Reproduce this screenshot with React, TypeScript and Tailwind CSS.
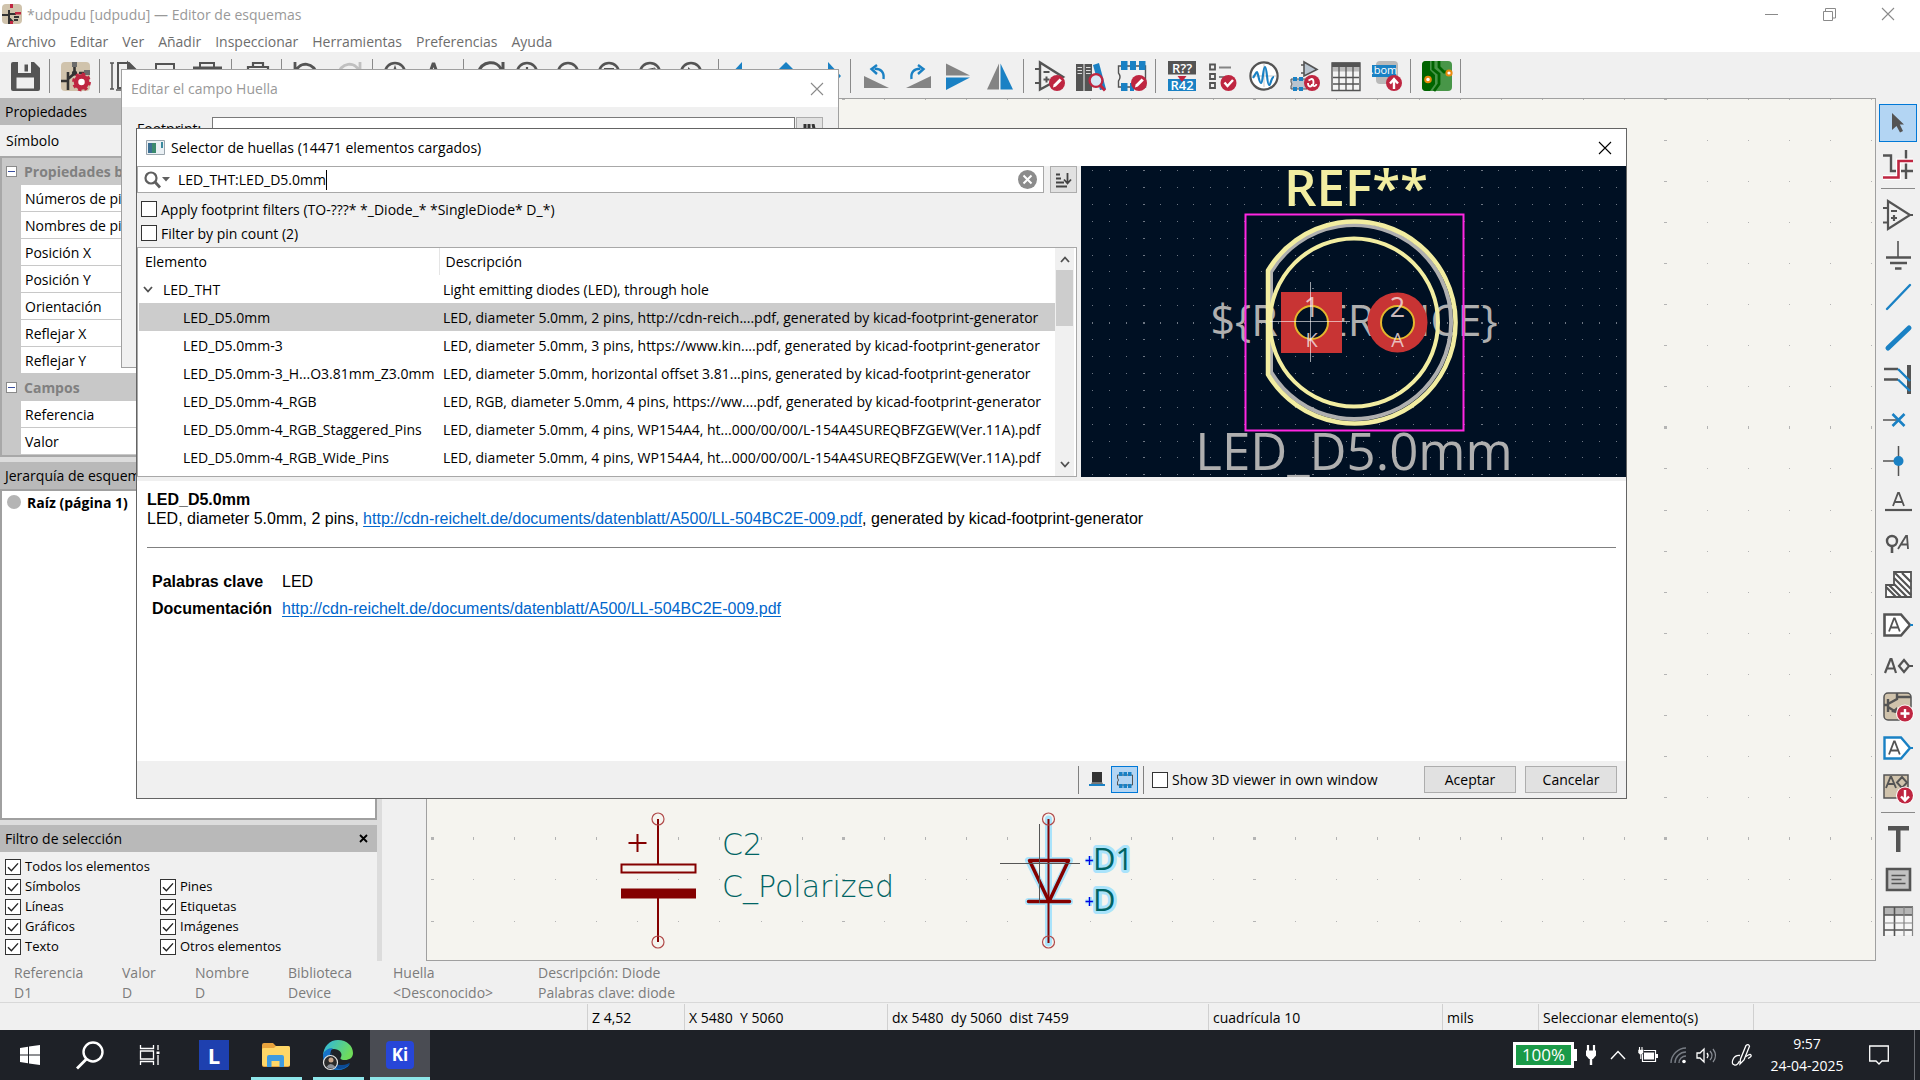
import React from "react";

type Kids = { children?: React.ReactNode };

const DARK = "#545454";
const BLUE = "#1a81c4";
const RED = "#bf2641";
const GRAY = "#848484";

/* ---------- shared pieces ---------- */

function Icon({ children, size = 30, w, h }: Kids & { size?: number; w?: number; h?: number }) {
  return (
    <svg width={w ?? size} height={h ?? size} viewBox={`0 0 ${w ?? size} ${h ?? size}`} fill="none" aria-hidden="true" className="block shrink-0 overflow-visible">
      {children}
    </svg>
  );
}

function Check({ label, checked = false, small = false }: { label: string; checked?: boolean; small?: boolean }) {
  return (
    <label className={small ? "flex h-5 items-center gap-1 text-[13px] whitespace-nowrap" : "flex h-6 items-center gap-1 text-[14px] whitespace-nowrap"}>
      <span className="grid size-4 shrink-0">
        <input type="checkbox" defaultChecked={checked} className="peer col-start-1 row-start-1 size-4 appearance-none border border-[#333333] bg-white" />
        <svg viewBox="0 0 16 16" className="pointer-events-none invisible col-start-1 row-start-1 size-4 peer-checked:visible" fill="none" stroke="#222" strokeWidth="1.4" aria-hidden="true">
          <path d="M3 8.2l3.4 3.6L13 4.4" />
        </svg>
      </span>
      {label}
    </label>
  );
}

function Cross({ color }: { color: string }) {
  return (
    <svg width="14" height="14" viewBox="0 0 14 14" stroke={color} strokeWidth="1.1" aria-hidden="true" className="block">
      <path d="M1 1l12 12M13 1L1 13" />
    </svg>
  );
}

/* ---------- top toolbar icons ---------- */

const Badge = ({ children }: Kids) => (
  <g>
    <circle cx="22" cy="22" r="8" fill={RED} />
    {children}
  </g>
);

const Pencil = () => (
  <Badge>
    <path d="M18 26.4l.6-3 6-6 2.2 2.2-6 6z" fill="#fff" />
  </Badge>
);

const Lens = ({ children }: Kids) => (
  <g>
    <circle cx="11" cy="12" r="10" stroke={DARK} strokeWidth="2.6" />
    <path d="M19 20l9 9" stroke={DARK} strokeWidth="3.4" />
    {children}
  </g>
);

const topIcons: Record<string, React.ReactNode> = {
  Guardar: (
    <g>
      <path d="M0 3q0-2 2-2h21l6 6v21q0 2-2 2H2q-2 0-2-2z" fill={DARK} />
      <path d="M7 1h13v11H7z" fill="#efefef" />
      <path d="M13.500 3.500h3.500v7h-3.500z" fill={DARK} />
      <path d="M5.500 16.500h17.500v11H5.500z" fill="#efefef" />
    </g>
  ),
  "Configurar esquema": (
    <g>
      <rect x="0" y="1" width="29" height="29" rx="4" fill="#d0c3ac" />
      <rect x="11" y="1" width="5" height="5" fill="#6b6b6b" />
      <path d="M13.500 6v5M7 11v18M0 20h7M7 18l7-6M18 12h8" stroke="#333" strokeWidth="2.600" />
      <circle cx="13.500" cy="12" r="2.600" fill="#333" />
      <rect x="23" y="9" width="6" height="5" fill="#6b6b6b" />
      <circle cx="20.500" cy="21" r="5.500" stroke={RED} strokeWidth="4.500" fill="#fff" />
      <circle cx="20.500" cy="21" r="8.200" stroke={RED} strokeWidth="2.400" strokeDasharray="3.400 3.040" />
    </g>
  ),
  Página: (
    <g stroke={DARK} strokeWidth="2">
      <path d="M7 2h11l7 7v18H7z" />
      <path d="M17 2v8h8z" fill={DARK} />
      <path d="M1 2v26M-1 2h4M-1 28h4M5 29h6" strokeWidth="1.500" />
    </g>
  ),
  Imprimir: (
    <g>
      <path d="M4 10V3h18v7" stroke={DARK} strokeWidth="2" />
      <path d="M0 8.500h27v13H0z" fill={DARK} />
    </g>
  ),
  Trazar: (
    <g>
      <path d="M7 6V2h14v4" stroke={DARK} strokeWidth="2" />
      <path d="M0 5.500h29v14H0z" fill={DARK} />
    </g>
  ),
  Pegar: (
    <g stroke={DARK} strokeWidth="2.200">
      <path d="M5 6h20v23H5z" />
      <path d="M10 6V2h10v4z" />
    </g>
  ),
  Deshacer: <path d="M2 1v10h9M3 10c4-10 18-9 21 4" stroke={DARK} strokeWidth="2.800" />,
  Rehacer: <path d="M26 1v10h-9M25 10C21 0 7 1 4 14" stroke="#c0c0c0" strokeWidth="2.800" />,
  Buscar: (
    <Lens>
      <path d="M8 16l3-9 3 9" stroke={DARK} strokeWidth="2" />
    </Lens>
  ),
  Reemplazar: <path d="M2 20L8 3h1l6 17M4 14h9" stroke={DARK} strokeWidth="3" />,
  Actualizar: <path d="M3 12C7-1 22-1 26 8M28 1v9h-9" stroke={DARK} strokeWidth="3" />,
  Acercar: (
    <Lens>
      <path d="M11 6v12M5 12h12" stroke={DARK} strokeWidth="2.200" />
    </Lens>
  ),
  Alejar: (
    <Lens>
      <path d="M5 12h12" stroke={DARK} strokeWidth="2.200" />
    </Lens>
  ),
  "Ajustar página": (
    <Lens>
      <path d="M6 7h10v9H6z" fill={DARK} />
    </Lens>
  ),
  "Ajustar objetos": (
    <Lens>
      <path d="M6 9l10-2v9H6z" stroke={DARK} />
    </Lens>
  ),
  "Ajustar selección": (
    <Lens>
      <path d="M8 6l8 7h-8z" fill={DARK} />
    </Lens>
  ),
  Atrás: <path d="M12 1v28L-1 15z" fill={BLUE} />,
  Arriba: <path d="M15 1l14 14H1z" fill={BLUE} />,
  Adelante: <path d="M16 1v28l13-14z" fill={BLUE} />,
  "Rotar a la izquierda": (
    <g>
      <path d="M2 15v12h25z" fill={GRAY} />
      <path d="M21.500 18c1-7-3-10.500-9-10.200" stroke={BLUE} strokeWidth="2.400" />
      <path d="M15 4l-5.500 4 5.500 5" stroke={BLUE} strokeWidth="2.400" />
    </g>
  ),
  "Rotar a la derecha": (
    <g>
      <path d="M28 15v12H3z" fill={GRAY} />
      <path d="M8.500 18c-1-7 3-10.500 9-10.200" stroke={BLUE} strokeWidth="2.400" />
      <path d="M15 4l5.500 4-5.500 5" stroke={BLUE} strokeWidth="2.400" />
    </g>
  ),
  "Reflejar vertical": (
    <g>
      <path d="M2 2.500v12h24z" fill={GRAY} />
      <path d="M2 29V16.500h24z" fill={BLUE} />
    </g>
  ),
  "Reflejar horizontal": (
    <g>
      <path d="M2 28.500h12V2.500z" fill={GRAY} />
      <path d="M15.500 28.500H28L15.500 2.500z" fill={BLUE} />
    </g>
  ),
  "Editor de símbolos": (
    <g>
      <path d="M5 1.500v27L28 16z" stroke={DARK} strokeWidth="2.400" />
      <path d="M0 8h5M0 22h5M8.500 11h6M8.500 18.500h6M11.500 15.500v6" stroke={DARK} strokeWidth="2" />
      <Pencil />
    </g>
  ),
  "Explorador de bibliotecas": (
    <g>
      <path d="M0 3h7.500v27H0zM8.500 3h7.500v27H8.500z" fill={DARK} />
      <path d="M1.500 6.500H6M1.500 9.500H6M1.500 12.500H6M10 6.500h4.500M10 9.500h4.500M10 12.500h4.500" stroke="#ddd" />
      <path d="M17 4l6-2 7 26-6 1z" fill={BLUE} />
      <circle cx="20" cy="19.500" r="6.400" fill="#d5e8f5" stroke={RED} strokeWidth="2.400" />
      <path d="M24 24l5 5.500" stroke={RED} strokeWidth="3" />
    </g>
  ),
  "Editor de huellas": (
    <g>
      <path d="M1.500 5h27v21h-27v-6q3-4 0-8z" stroke={DARK} strokeWidth="1.400" />
      <path d="M4 0h6.500v9H4zM13 0h6v9h-6zM22 0h6.500v9H22zM4 22h6.500v8H4zM13 22h4v8h-4z" fill={BLUE} />
      <Pencil />
    </g>
  ),
  Anotar: (
    <g>
      <path d="M1 0h28v13.500H1z" fill={DARK} />
      <path d="M1 18h28v12H1z" fill={BLUE} />
      <text x="15" y="12" fontSize="13" fontWeight="600" textAnchor="middle" fill="#fff">R??</text>
      <text x="15" y="29" fontSize="13" fontWeight="600" textAnchor="middle" fill="#fff">R42</text>
      <path d="M10.500 15h9L15 21z" fill={RED} />
    </g>
  ),
  "Comprobar reglas": (
    <g>
      <path d="M2 3.500h5v5H2zM2 13h5v5H2zM2 22h5v5H2z" stroke={DARK} strokeWidth="1.800" />
      <path d="M11 6.500h12M11 16h6" stroke={GRAY} strokeWidth="1.800" />
      <circle cx="20.500" cy="22" r="8" fill={RED} />
      <path d="M16.500 21.500l3 3.500 5.500-6" stroke="#fff" strokeWidth="2.400" />
    </g>
  ),
  Simulador: (
    <g>
      <circle cx="15" cy="15" r="13.600" fill="#fff" stroke={DARK} strokeWidth="2.200" />
      <path d="M15 3v23M3 15h24" stroke="#c9c9c9" />
      <path d="M4 17c2-3 3-6 4-6s2 11 4 11 2-16 4-16 2 18 4 18 2-8 5-8" stroke={BLUE} strokeWidth="2.200" />
    </g>
  ),
  "Asignar huellas": (
    <g>
      <path d="M14 1v14l13-6.500z" fill="#b8c4cf" stroke={DARK} strokeWidth="1.600" />
      <path d="M11 4h3M11 12h3" stroke={DARK} strokeWidth="1.600" />
      <path d="M1 18h16v10H1v-3q2-2 0-4z" fill="#b8c4cf" stroke={DARK} />
      <path d="M3 16h4v4H3zM9 16h4v4H9zM3 26h4v4H3zM9 26h4v4H9z" fill={BLUE} />
      <Badge>
        <path d="M18.500 19.500l3-1.500c3 0 2 6 1 6s3 3 4-1M18 22c0 5 4 4 4 1" stroke="#fff" strokeWidth="1.800" />
      </Badge>
    </g>
  ),
  "Tabla de campos": (
    <g>
      <path d="M1 2h28v27.500H1z" fill="#f4f4f4" stroke={DARK} strokeWidth="1.400" />
      <path d="M1 1.500h28v4.500H1z" fill={DARK} />
      <path d="M2 6h26v4.500H2z" fill="#bbb" />
      <path d="M2 16.500h26M2 23h26M8 6v23M15 6v23M22 6v23" stroke={DARK} strokeWidth="1.300" />
    </g>
  ),
  "Lista de materiales": (
    <g>
      <rect x="4" y="0" width="22" height="23" rx="4" fill="#b9b9b9" />
      <path d="M0 4h24v12H0z" fill={BLUE} />
      <text x="12" y="13" fontSize="11" textAnchor="middle" fill="#fff">.bom</text>
      <Badge>
        <path d="M22 28v-9M18 22.500l4-4.500 4 4.500" stroke="#fff" strokeWidth="2.400" />
      </Badge>
    </g>
  ),
  "Editor de placas": (
    <g>
      <rect x="0" y="0" width="30" height="30" rx="4" fill="#489648" />
      <path d="M4 0h4v9l5 5v9l-5 7H4q-4 0-4-4V4q0-4 4-4z" fill="#006400" />
      <path d="M11 0v8l6 5v10l-5 7M17 0v6l5 5h6" stroke="#006400" strokeWidth="2.800" />
      <circle cx="6" cy="18.500" r="2.800" fill="#fff" stroke="#e8890c" strokeWidth="2" />
      <circle cx="27" cy="12" r="2.600" fill="#fff" stroke="#e8890c" strokeWidth="2" />
    </g>
  ),
};

const topGroups: string[][] = [
  ["Guardar"],
  ["Configurar esquema"],
  ["Página", "Imprimir", "Trazar"],
  ["Pegar"],
  ["Deshacer", "Rehacer"],
  ["Buscar", "Reemplazar"],
  ["Actualizar", "Acercar", "Alejar", "Ajustar página", "Ajustar objetos", "Ajustar selección"],
  ["Atrás", "Arriba", "Adelante"],
  ["Rotar a la izquierda", "Rotar a la derecha", "Reflejar vertical", "Reflejar horizontal"],
  ["Editor de símbolos", "Explorador de bibliotecas", "Editor de huellas"],
  ["Anotar", "Comprobar reglas", "Simulador", "Asignar huellas", "Tabla de campos", "Lista de materiales"],
  ["Editor de placas"],
];

function TopToolbar() {
  return (
    <div className="flex h-[46px] shrink-0 items-center bg-[#f0f0f0] pt-[2px] pl-[5px]">
      {topGroups.map((group, i) => (
        <div key={i} className="flex items-center">
          {group.map((name) => (
            <button key={name} title={name} className="flex w-[41px] justify-center">
              <Icon>{topIcons[name]}</Icon>
            </button>
          ))}
          <div className="mr-[5px] ml-[3px] h-[34px] w-px bg-[#8a8a8a]" />
        </div>
      ))}
    </div>
  );
}

/* ---------- right toolbar ---------- */

const sideGroups: { name: string; art: React.ReactNode }[][] = [
  [
    { name: "Seleccionar", art: <path d="M9 5v17l4.500-4 3.500 6.500 3-1.500-3.200-6.500H21z" fill={DARK} /> },
    {
      name: "Resaltar red",
      art: (
        <g strokeWidth="2.400">
          <path d="M0 5.500h8v15.500h5M18 21h12M23 0v29" stroke={DARK} />
          <path d="M0 27.500h15.500v-16.500H30" stroke="#fff" strokeWidth="5" />
          <path d="M0 27.500h15.500v-16.500H30" stroke={RED} strokeWidth="2.600" />
        </g>
      ),
    },
  ],
  [
    {
      name: "Añadir símbolo",
      art: <path d="M5 1v28l22-14zM0 8h5M0 22.500h5M27 15h3M8 11h6M8 18h6M11 15v6" stroke={DARK} strokeWidth="2.200" />,
    },
    {
      name: "Añadir alimentación",
      art: (
        <g stroke={DARK}>
          <path d="M15 0v16" strokeWidth="1.600" />
          <path d="M3 16.500h25M7 22h17M12 27.500h6.500" strokeWidth="2.600" />
        </g>
      ),
    },
    { name: "Añadir cable", art: <path d="M4 27L27 3" stroke={BLUE} strokeWidth="2.400" strokeLinecap="round" /> },
    { name: "Añadir bus", art: <path d="M5 25L26 5" stroke={BLUE} strokeWidth="5" strokeLinecap="round" /> },
    {
      name: "Entrada de bus",
      art: (
        <g>
          <path d="M26 1v29" stroke={DARK} strokeWidth="4" />
          <path d="M1 5h14M1 15.500h14" stroke={DARK} strokeWidth="2.400" />
          <path d="M15 5l12 12M15 15.500L27 27" stroke={BLUE} strokeWidth="2.400" />
        </g>
      ),
    },
    {
      name: "No conectado",
      art: (
        <g>
          <path d="M0 15h15" stroke={DARK} strokeWidth="1.500" />
          <path d="M9.500 9l12 12M21.500 9l-12 12" stroke={BLUE} strokeWidth="2.600" />
        </g>
      ),
    },
    {
      name: "Unión",
      art: (
        <g>
          <path d="M0 15h15M15.500 0v30" stroke={DARK} strokeWidth="1.500" />
          <circle cx="15.500" cy="15" r="5" fill={BLUE} />
        </g>
      ),
    },
    {
      name: "Etiqueta de red",
      art: (
        <g stroke={DARK}>
          <path d="M10 19l5-13h1l5 13M12 15h7" strokeWidth="1.800" />
          <path d="M2 23h27" strokeWidth="2.200" />
        </g>
      ),
    },
    {
      name: "Clase de red",
      art: (
        <g stroke={DARK}>
          <circle cx="9" cy="13" r="5" strokeWidth="2.400" />
          <path d="M9 18v7" strokeWidth="2.600" />
          <path d="M15 21l8-13h1l1 13M18 16.500h7" strokeWidth="1.800" />
        </g>
      ),
    },
    {
      name: "Área de reglas",
      art: (
        <g stroke={DARK}>
          <path d="M3 28V16h8V3h17v25z" strokeWidth="1.800" fill="#fff" />
          <path d="M12 4l16 16M11 9l17 17M11 15l13 13M6 16l12 12M3 18l10 10M19 4l9 9" strokeWidth="2.200" />
        </g>
      ),
    },
    {
      name: "Etiqueta global",
      art: (
        <g>
          <path d="M1.500 4.500H18L27 15l-9 10.500H1.500z" stroke={DARK} strokeWidth="2.600" fill="#fff" />
          <path d="M27 15h3" stroke={BLUE} strokeWidth="2" />
          <path d="M6 21.500l5-13h.8l5 13M7.500 17.500h7.500" stroke={DARK} strokeWidth="1.800" />
        </g>
      ),
    },
    {
      name: "Etiqueta jerárquica",
      art: (
        <path d="M2 22l5.500-14h1L13 22M4 17.500h8M16 15l5-6 5 6-5 6zM26 15h4" stroke={DARK} strokeWidth="2.200" />
      ),
    },
    {
      name: "Añadir hoja",
      art: (
        <g>
          <rect x="1" y="1" width="27" height="27" rx="4" fill="#d0c3ac" stroke={DARK} strokeWidth="1.500" />
          <path d="M5 7v13M1 13h4M5 12l9-5V1M14 5h14M5 15l8 5" stroke={DARK} strokeWidth="2.400" />
          <path d="M14 15l-6 5 6 1z" fill={DARK} />
          <circle cx="22" cy="21.500" r="9" fill="#fff" />
          <circle cx="22" cy="21.500" r="8" fill={RED} />
          <path d="M22 17v9M17.500 21.500h9" stroke="#fff" strokeWidth="2.400" />
        </g>
      ),
    },
    {
      name: "Pin de hoja",
      art: (
        <g>
          <path d="M1.500 4.500H18L27 15l-9 10.500H1.500z" stroke={BLUE} strokeWidth="2.400" fill="#fff" />
          <path d="M27 15h3" stroke={BLUE} strokeWidth="2" />
          <path d="M6 21.500l5-13h.8l5 13M7.500 17.500h7.500" stroke={DARK} strokeWidth="1.800" />
        </g>
      ),
    },
    {
      name: "Importar pines",
      art: (
        <g>
          <path d="M1 1h24v23H1z" fill="#d0c3ac" stroke={DARK} strokeWidth="1.500" />
          <path d="M3 14l4.500-11h.8L13 14M5 10h6M14 8.500l5-5.500 5 5.500-5 5.500z" stroke={DARK} strokeWidth="1.900" />
          <circle cx="22" cy="21.500" r="9" fill="#fff" />
          <circle cx="22" cy="21.500" r="8" fill={RED} />
          <path d="M22 16v10M18 22.500l4 4 4-4" stroke="#fff" strokeWidth="2.400" />
        </g>
      ),
    },
  ],
  [
    { name: "Texto", art: <path d="M5 2h21v4.500h-8.500V28h-4.500V6.500H5z" fill={DARK} /> },
    {
      name: "Cuadro de texto",
      art: (
        <g stroke={DARK}>
          <path d="M4 4h23v21H4z" fill="#c2c2c2" strokeWidth="2.600" />
          <path d="M8.500 10.500h14M8.500 14.500h10M8.500 18.500h14" strokeWidth="1.600" />
        </g>
      ),
    },
    {
      name: "Tabla",
      art: (
        <g>
          <path d="M1 1h29v28H1z" fill="#f6f6f6" />
          <path d="M1 1h29v8H1z" fill="#b5b5b5" />
          <path d="M1 30V1h29M1 9h29M11.500 1v29M1 24h29" stroke={DARK} strokeWidth="1.600" />
          <path d="M21 1v29M1 17h29M29.500 1v29" stroke={GRAY} strokeWidth="1.200" />
        </g>
      ),
    },
  ],
];

function SideToolbar() {
  return (
    <div className="flex w-11 shrink-0 flex-col items-center bg-[#f0f0f0] pt-[5px]">
      {sideGroups.map((group, i) => (
        <div key={i} className="flex flex-col items-center">
          {i > 0 && <div className="mt-[3px] mb-[5px] h-px w-[34px] bg-[#8a8a8a]" />}
          {group.map((tool) => (
            <button
              key={tool.name}
              title={tool.name}
              className={
                tool.name === "Seleccionar"
                  ? "mt-px mb-[2px] flex size-[38px] items-center justify-center border border-[#0078d7] bg-[#b3d5f3]"
                  : "flex h-[41px] w-[38px] items-center justify-center"
              }
            >
              <Icon>{tool.art}</Icon>
            </button>
          ))}
        </div>
      ))}
    </div>
  );
}

/* ---------- left panels ---------- */

function PanelHeader({ title, closable = false }: { title: string; closable?: boolean }) {
  return (
    <div className="flex h-[27px] shrink-0 items-center justify-between bg-[#b9b9b9] pr-[5px] pl-[5px] text-[14px]">
      <h2>{title}</h2>
      {closable && (
        <button aria-label="Cerrar panel" className="p-1">
          <svg width="9" height="9" viewBox="0 0 9 9" stroke="#000" strokeWidth="1.800" aria-hidden="true">
            <path d="M1 1l7 7M8 1L1 8" />
          </svg>
        </button>
      )}
    </div>
  );
}

function PropertyGroup({ title, rows }: { title: string; rows: string[] }) {
  return (
    <section>
      <h3 className="flex h-[27px] items-center gap-[7px] pl-1 text-[14px] font-bold text-[#808080]">
        <span className="flex size-[11px] items-center justify-center border border-[#8a8a8a] bg-white">
          <span className="h-px w-[7px] bg-[#3a4fa0]" />
        </span>
        {title}
      </h3>
      <ul className="ml-[19px] bg-white">
        {rows.map((r) => (
          <li key={r} className="flex h-[27px] items-center border-b border-[#c8c8c8] pl-1 text-[14px] whitespace-nowrap">
            {r}
          </li>
        ))}
      </ul>
    </section>
  );
}

function LeftPanels() {
  return (
    <div className="flex w-[382px] shrink-0 flex-col border-r-[5px] border-[#dcdcdc] bg-[#f0f0f0]">
      <PanelHeader title="Propiedades" />
      <div className="flex h-[31px] shrink-0 items-center pl-[6px] text-[14px]">Símbolo</div>
      <div className="border-2 border-[#a8a8a8] bg-[#c8c8c8]">
        <PropertyGroup
          title="Propiedades básicas"
          rows={["Números de pines", "Nombres de pines", "Posición X", "Posición Y", "Orientación", "Reflejar X", "Reflejar Y"]}
        />
        <PropertyGroup title="Campos" rows={["Referencia", "Valor"]} />
      </div>
      <div className="h-[5px] shrink-0 bg-[#dcdcdc]" />
      <PanelHeader title="Jerarquía de esquemas" />
      <div className="flex-1 border-2 border-[#a0a0a0] bg-white">
        <div className="flex h-[22px] items-center gap-[6px] pl-[5px] text-[14px] font-bold">
          <span className="size-[14px] rounded-full bg-[#b4b4b4]" />
          Raíz (página 1)
        </div>
      </div>
      <div className="h-[5px] shrink-0 bg-[#dcdcdc]" />
      <PanelHeader title="Filtro de selección" closable />
      <div className="grid shrink-0 grid-cols-[155px_1fr] pt-[5px] pb-1 pl-[5px]">
        <div className="col-span-2">
          <Check small checked label="Todos los elementos" />
        </div>
        {["Símbolos", "Pines", "Líneas", "Etiquetas", "Gráficos", "Imágenes", "Texto", "Otros elementos"].map((t) => (
          <Check key={t} small checked label={t} />
        ))}
      </div>
    </div>
  );
}

/* ---------- schematic canvas ---------- */

function Pin({ x, y }: { x: number; y: number }) {
  return <circle cx={x} cy={y} r="6" stroke="#b04a4a" strokeWidth="1.200" />;
}

function Schematic() {
  const cols = Array.from({ length: 36 }, (_, i) => i);
  const rows = Array.from({ length: 21 }, (_, i) => i);
  return (
    <svg className="block h-full w-full" fill="none" role="img" aria-label="Esquema">
      {cols.map((c) =>
        rows.map((r) => {
          const wide = c % 10 === 0;
          const tall = r % 10 === 8;
          const w = wide ? 3 : 1;
          const h = tall ? 3 : 1;
          return <rect key={`${c}-${r}`} x={Math.round(5 + c * 41.13 - w / 2)} y={Math.round(r * 41.1 - h / 2)} width={w} height={h} fill="#b4b4b4" />;
        })
      )}
      <g transform="translate(0 1)">
        <g stroke="#840000" strokeWidth="2">
          <path d="M231 719v45M231 798v44M201.500 743h18M210.500 734v18" />
          <path d="M194.500 764.500h74v8h-74z" />
          <path d="M194 788.500h75v10h-75z" fill="#840000" stroke="none" />
        </g>
        <Pin x={231} y={719} />
        <Pin x={231} y={842} />
        <g fill="#006464" fontFamily="'DejaVu Sans', sans-serif" fontWeight="200" fontSize="30">
          <text x="295" y="755">C2</text>
          <text x="295" y="797">C_Polarized</text>
        </g>
        <path d="M621.500 719v124M601.500 760.500h41l-20.500 41zM601.500 801.500h41" stroke="#a9e3fb" strokeWidth="7" strokeLinecap="round" strokeLinejoin="round" />
        <path d="M621.500 719v124" stroke="#840000" strokeWidth="2" />
        <path d="M602.500 760.500h39l-19.500 41zM601.500 801.500h41" stroke="#840000" strokeWidth="3.500" strokeLinecap="round" strokeLinejoin="round" />
        <path d="M573 763.500h80M612.500 724v79" stroke="#555" />
        <Pin x={621.5} y={719} />
        <Pin x={621.5} y={842} />
        <path d="M658.500 760.500h9M663 756v9M658.500 801.500h9M663 797v9" stroke="#a9e3fb" strokeWidth="4" />
        <path d="M658.500 760.500h9M662.500 756v9M658.500 801.500h9M662.500 797v9" stroke="#0000e0" strokeWidth="1.300" />
        <g fontFamily="'Open Sans', sans-serif" fontSize="31" stroke="#a9e3fb" strokeWidth="6" strokeLinejoin="round" fill="#006464" className="[paint-order:stroke]">
          <text x="666" y="770">D1</text>
          <text x="666" y="811">D</text>
        </g>
      </g>
    </svg>
  );
}

/* ---------- footprint preview ---------- */

function Preview() {
  const cols = Array.from({ length: 33 }, (_, i) => i);
  const rows = Array.from({ length: 19 }, (_, i) => i);
  const face = "'Open Sans', sans-serif";
  return (
    <svg className="block h-[311px] w-[545px] shrink-0 bg-[#001023]" viewBox="0 0 545 311" fill="none" role="img" aria-label="Vista previa de la huella">
      {cols.map((c) =>
        rows.map((r) => {
          const w = c % 10 === 3 ? 2 : 1;
          const h = r === 9 ? 2 : 1;
          return <rect key={`${c}-${r}`} x={Math.round(11 + c * 16.91)} y={Math.round(4 + r * 16.91)} width={w} height={h} fill="#6d7683" />;
        })
      )}
      <g textAnchor="middle" fontFamily={face}>
        <text x="273" y="170" fontSize="43" fill="#afafaf">{"${REFERENCE}"}</text>
        <text x="273" y="304" fontSize="51" fill="#afafaf">LED_D5.0mm</text>
        <text x="275" y="40" fontSize="51" fontWeight="600" fill="#f2eda1">REF**</text>
      </g>
      <path d="M190 106A97 97 0 1 1 190 206z" stroke="#afafaf" strokeWidth="4" />
      <path d="M187 104.500A101 101 0 1 1 187 208.500z" stroke="#f2eda1" strokeWidth="4.500" />
      <circle cx="273" cy="156.500" r="84" stroke="#f2eda1" strokeWidth="4" />
      <path d="M164.500 48.500h218v216h-218z" stroke="#ff26e2" strokeWidth="2" />
      <path d="M200 126h61v61h-61z" fill="#c83434" />
      <circle cx="316.500" cy="156.500" r="30" fill="#c83434" />
      <circle cx="230.500" cy="156.500" r="16.500" fill="#001023" stroke="#e3b72e" strokeWidth="2" />
      <circle cx="316.500" cy="156.500" r="16.500" fill="#001023" stroke="#e3b72e" strokeWidth="2" />
      <g textAnchor="middle" fontFamily={face} fill="#f0d8d8" fillOpacity="0.850">
        <text x="230.500" y="151" fontSize="27">1</text>
        <text x="316.500" y="151" fontSize="27">2</text>
        <text x="230.500" y="181" fontSize="20">K</text>
        <text x="316.500" y="181" fontSize="20">A</text>
      </g>
      <path d="M189 155.500h80M229.500 116v80" stroke="#fff" strokeOpacity="0.600" />
    </svg>
  );
}

/* ---------- dialogs ---------- */

function FieldDialog() {
  return (
    <div className="absolute top-[69px] left-[121px] flex h-[299px] w-[718px] flex-col border border-[#a0a0a0] bg-[#f0f0f0]">
      <div className="flex h-[37px] shrink-0 items-center justify-between bg-white pr-[14px] pl-[9px] text-[14px] text-[#999]">
        <span>Editar el campo Huella</span>
        <button aria-label="Cerrar">
          <Cross color="#8a8a8a" />
        </button>
      </div>
      <label className="flex items-start pt-[10px] pl-[15px] text-[14px]">
        <span className="w-[75px] pt-px">Footprint:</span>
        <input className="h-7 w-[583px] border border-[#7a7a7a] bg-white" />
        <button type="button" aria-label="Explorar huellas" className="ml-px flex h-7 w-[27px] justify-center border border-[#adadad] bg-[#e1e1e1] pt-[6px]">
          <svg width="14" height="14" viewBox="0 0 14 14" stroke="#333" strokeWidth="3" aria-hidden="true">
            <path d="M2 0v14M6 0v14M10 0l3 14" />
          </svg>
        </button>
      </label>
    </div>
  );
}

const footprints: [string, string][] = [
  ["LED_D5.0mm", "LED, diameter 5.0mm, 2 pins, http://cdn-reich....pdf, generated by kicad-footprint-generator"],
  ["LED_D5.0mm-3", "LED, diameter 5.0mm, 3 pins, https://www.kin....pdf, generated by kicad-footprint-generator"],
  ["LED_D5.0mm-3_H...O3.81mm_Z3.0mm", "LED, diameter 5.0mm, horizontal offset 3.81...pins, generated by kicad-footprint-generator"],
  ["LED_D5.0mm-4_RGB", "LED, RGB, diameter 5.0mm, 4 pins, https://ww....pdf, generated by kicad-footprint-generator"],
  ["LED_D5.0mm-4_RGB_Staggered_Pins", "LED, diameter 5.0mm, 4 pins, WP154A4, ht...000/00/00/L-154A4SUREQBFZGEW(Ver.11A).pdf"],
  ["LED_D5.0mm-4_RGB_Wide_Pins", "LED, diameter 5.0mm, 4 pins, WP154A4, ht...000/00/00/L-154A4SUREQBFZGEW(Ver.11A).pdf"],
];

function Chevron({ up = false }: { up?: boolean }) {
  return (
    <svg width="10" height="7" viewBox="0 0 10 7" fill="none" stroke="#505050" strokeWidth="1.800" aria-hidden="true">
      <path d={up ? "M1 6l4-4.500L9 6" : "M1 1l4 4.500L9 1"} />
    </svg>
  );
}

function FootprintTable() {
  return (
    <div className="flex h-[230px] border border-[#a8a8a8] bg-white pr-[2px]">
      <div className="min-w-0 flex-1 overflow-hidden pl-px">
        <table className="w-full table-fixed border-collapse text-left text-[14px] whitespace-nowrap">
          <colgroup>
            <col className="w-[300px]" />
            <col />
          </colgroup>
          <thead>
            <tr className="h-[27px]">
              <th className="border-r border-[#e5e5e5] pl-[6px] font-normal">Elemento</th>
              <th className="pl-[6px] font-normal">Descripción</th>
            </tr>
          </thead>
          <tbody>
            <tr className="h-7">
              <td className="pl-1">
                <span className="flex items-center gap-[10px]">
                  <Chevron />
                  LED_THT
                </span>
              </td>
              <td className="pl-1">Light emitting diodes (LED), through hole</td>
            </tr>
            {footprints.map(([name, desc], i) => (
              <tr key={name} className={i === 0 ? "h-7 bg-[#cccccc]" : "h-7"}>
                <td className="pl-11">{name}</td>
                <td className="pl-1">{desc}</td>
              </tr>
            ))}
          </tbody>
        </table>
      </div>
      <div className="flex w-[19px] flex-col items-center bg-[#f0f0f0] py-2">
        <Chevron up />
        <div className="mt-[7px] h-14 w-[17px] bg-[#cdcdcd]" />
        <div className="flex-1" />
        <Chevron />
      </div>
    </div>
  );
}

const DOC_URL = "http://cdn-reichelt.de/documents/datenblatt/A500/LL-504BC2E-009.pdf";

function DocLink() {
  return (
    <a href="#doc" className="text-[#0066cc] underline underline-offset-2">
      {DOC_URL}
    </a>
  );
}

function ChooserDialog() {
  return (
    <div className="absolute top-[128px] left-[136px] flex w-[1491px] flex-col border border-[#646464] bg-[#f0f0f0]">
      <div className="flex h-[37px] items-center bg-white pr-[14px] pl-[9px] text-[14px]">
        <svg width="19" height="15" viewBox="0 0 19 15" aria-hidden="true">
          <path d="M.5.500h18v14H.5z" fill="#eaf0f4" stroke="#9aa5ad" />
          <path d="M2 3h8v10H2z" fill="#3b8a6e" />
          <path d="M2 3h4v10H2z" fill="#3c6f93" />
          <path d="M15 2h2v6h-2z" fill="#3b8a9e" />
        </svg>
        <span className="ml-[6px] flex-1">Selector de huellas (14471 elementos cargados)</span>
        <button aria-label="Cerrar">
          <Cross color="#000" />
        </button>
      </div>

      <div className="flex items-start">
        <div className="flex min-w-0 flex-1 flex-col pr-1">
          <div className="flex items-center gap-[6px]">
            <div className="flex h-[27px] flex-1 items-center border border-[#a8a8a8] bg-white pr-[6px] pl-[6px]">
              <svg width="27" height="18" viewBox="0 0 27 18" fill="none" aria-hidden="true">
                <circle cx="7" cy="7" r="5.500" stroke="#5f5f5f" strokeWidth="2.200" />
                <path d="M11 11l5 5.500" stroke="#5f5f5f" strokeWidth="2.800" />
                <path d="M18 6h8l-4 4.500z" fill="#5f5f5f" />
              </svg>
              <input aria-label="Buscar huella" defaultValue="LED_THT:LED_D5.0mm" className="ml-[7px] bg-transparent text-[14px] outline-none [field-sizing:content]" />
              <span className="h-5 w-px bg-black" />
              <span className="flex-1" />
              <button aria-label="Borrar búsqueda">
                <svg width="19" height="19" viewBox="0 0 19 19" aria-hidden="true">
                  <circle cx="9.500" cy="9.500" r="9.500" fill="#8c8c8c" />
                  <path d="M5.500 5.500l8 8M13.500 5.500l-8 8" stroke="#fff" strokeWidth="2" />
                </svg>
              </button>
            </div>
            <button aria-label="Ordenar" className="flex size-[27px] items-center justify-center border border-[#adadad] bg-[#e1e1e1]">
              <svg width="17" height="16" viewBox="0 0 17 16" fill="none" stroke="#444" strokeWidth="1.800" aria-hidden="true">
                <path d="M1 2.500h4M1 6.500h5M1 10.500h8M1 14.500h11M12.500 1v10M9 7.500l3.500 4 3.500-4" />
              </svg>
            </button>
          </div>
          <div className="pt-1 pb-[2px] pl-1">
            <Check label="Apply footprint filters (TO-???* *_Diode_* *SingleDiode* D_*)" />
            <Check label="Filter by pin count (2)" />
          </div>
          <FootprintTable />
        </div>
        <Preview />
      </div>

      <div className="mt-1 h-[280px] bg-white px-[10px] pt-[9px] font-['Liberation_Sans',Arial,sans-serif] text-[16px] leading-[19px]">
        <h2 className="font-bold">LED_D5.0mm</h2>
        <p>
          LED, diameter 5.0mm, 2 pins, <DocLink />, generated by kicad-footprint-generator
        </p>
        <hr className="mt-[19px] border-[#808080]" />
        <table className="mt-5 ml-[5px] text-left">
          <tbody>
            <tr className="h-[27px]">
              <th className="w-[130px] font-bold">Palabras clave</th>
              <td>LED</td>
            </tr>
            <tr className="h-[27px]">
              <th className="font-bold">Documentación</th>
              <td>
                <DocLink />
              </td>
            </tr>
          </tbody>
        </table>
      </div>

      <div className="flex h-[37px] items-center justify-end pr-[9px] text-[14px]">
        <div className="h-7 w-px bg-[#808080]" />
        <button aria-label="Vista 3D" className="ml-[10px]">
          <svg width="16" height="18" viewBox="0 0 16 18" aria-hidden="true">
            <path d="M3 1h10v10H3z" fill="#333" />
            <path d="M3 11h10l1 2H2z" fill="#777" />
            <path d="M0 13h16v2H0z" fill={BLUE} />
          </svg>
        </button>
        <button aria-label="Vista de huella" className="ml-[6px] flex size-[27px] items-center justify-center border border-[#0078d7] bg-[#b3d5f3]">
          <svg width="18" height="18" viewBox="0 0 18 18" fill="none" aria-hidden="true">
            <path d="M1.500 4h15v10h-15v-3q2-2 0-4z" stroke={DARK} />
            <path d="M3 1h3.500v4H3zM7.500 1H11v4H7.500zM12 1h3.500v4H12zM3 13h3.500v4H3zM7.500 13H11v4H7.500zM12 13h3.500v4H12z" fill={BLUE} />
          </svg>
        </button>
        <div className="mr-2 ml-[5px] h-7 w-px bg-[#808080]" />
        <div className="w-[272px]">
          <Check label="Show 3D viewer in own window" />
        </div>
        <button className="h-[27px] w-[92px] border border-[#adadad] bg-[#e1e1e1]">Aceptar</button>
        <button className="ml-[9px] h-[27px] w-[92px] border border-[#adadad] bg-[#e1e1e1]">Cancelar</button>
      </div>
    </div>
  );
}

/* ---------- bottom bars ---------- */

const info: [string, string, string][] = [
  ["Referencia", "D1", "w-[108px]"],
  ["Valor", "D", "w-[73px]"],
  ["Nombre", "D", "w-[93px]"],
  ["Biblioteca", "Device", "w-[105px]"],
  ["Huella", "<Desconocido>", "w-[145px]"],
  ["Descripción: Diode", "Palabras clave: diode", ""],
];

const cells: [string, string][] = [
  ["", "w-[588px]"],
  ["Z 4,52", "w-[97px]"],
  ["X 5480  Y 5060", "w-[203px]"],
  ["dx 5480  dy 5060  dist 7459", "w-[321px]"],
  ["cuadrícula 10", "w-[234px]"],
  ["mils", "w-[96px]"],
  ["Seleccionar elemento(s)", "w-[215px]"],
];

function BottomBars() {
  return (
    <div className="shrink-0 bg-[#f0f0f0]">
      <div className="flex h-[42px] border-b border-[#d8d8d8] pt-[2px] pl-[14px] text-[14px] leading-5 whitespace-nowrap text-[#7c7c7c]">
        {info.map(([a, b, w]) => (
          <div key={a} className={w}>
            <div>{a}</div>
            <div>{b}</div>
          </div>
        ))}
      </div>
      <div className="flex h-[27px] items-stretch pt-px text-[14px]">
        {cells.map(([t, w], i) => (
          <div key={i} className={`${w} flex items-center border-r border-[#d0d0d0] pl-1 whitespace-pre`}>
            {t}
          </div>
        ))}
      </div>
    </div>
  );
}

function Taskbar() {
  return (
    <footer className="flex h-[50px] shrink-0 items-stretch bg-[#1e2127] text-[14px] text-white">
      <button aria-label="Inicio" className="flex w-[60px] items-center justify-center">
        <Icon size={20}>
          <path d="M0 3l8-1.200v7.700H0zM9 1.600L20 0v9.500H9zM0 10.500h8v7.700L0 17zM9 10.500h11V20L9 18.400z" fill="#fff" />
        </Icon>
      </button>
      <button aria-label="Buscar" className="flex w-[60px] items-center justify-center">
        <Icon size={30}>
          <circle cx="18" cy="12" r="9.500" stroke="#fff" strokeWidth="2.400" />
          <path d="M11.500 19L2 28.500" stroke="#fff" strokeWidth="2.800" />
        </Icon>
      </button>
      <button aria-label="Vista de tareas" className="flex w-[60px] items-center justify-center">
        <Icon size={20}>
          <path d="M.5 0v3.500h13V0M.5 6h13v8H.5zM.5 20v-3.500h13V20M18 0v5M18 10v10" stroke="#fff" strokeWidth="1.300" />
          <path d="M16.500 6.500h3v2.500h-3z" fill="#fff" />
        </Icon>
      </button>
      <div className="flex w-[71px] items-center justify-center pr-[3px]">
        <button className="size-[30px] bg-[#1e40af] text-[22px] leading-[30px] font-bold">L</button>
      </div>
      <button aria-label="Explorador de archivos" className="flex w-[51px] items-center justify-center border-b-[3px] border-[#8ee6ea] pt-[3px] pr-[2px]">
        <Icon size={28}>
          <path d="M0 4q0-2 2-2h9l3 3h12q2 0 2 2v17q0 2-2 2H2q-2 0-2-2z" fill="#e8a33d" />
          <path d="M0 8q0-1 2-1h10l2-2h12q2 0 2 2v17q0 1-2 1H2q-2 0-2-2z" fill="#ffd767" />
          <path d="M5 26V16q0-2 2-2h13q2 0 2 2v10h-4.500v-6h-8v6z" fill="#3f9be0" />
        </Icon>
      </button>
      <button aria-label="Edge" className="ml-[11px] flex w-[51px] items-center justify-center border-b-[3px] border-[#8ee6ea] pt-[3px] pr-[2px]">
        <Icon size={30}>
          <defs>
            <linearGradient id="edge" x1="0" y1="0" x2="1" y2="0.400">
              <stop offset="0" stopColor="#2bb5e8" />
              <stop offset="1" stopColor="#6fdc5a" />
            </linearGradient>
          </defs>
          <path d="M15 0C24 0 30 6 30 13c0 5-4 7-8 7-5 0-5-2-4-3 2-4-2-8-7-8C5 9 0 13 0 17 0 6 7 0 15 0z" fill="url(#edge)" />
          <path d="M0 16c0-5 5-8 10-8-4 3-5 16 8 19 4 0 7-2 9-3-3 4-7 6-12 6C6 30 0 24 0 16z" fill="#1673c9" />
          <path d="M10 11c-4 6 1 15 9 14 4 0 7-2 8-2-3 5-8 6-11 6-7-1-11-12-6-18z" fill="#0c4a94" />
          <circle cx="7.500" cy="22.500" r="7" fill="#2b2b2b" stroke="#e5e5e5" strokeWidth="1.200" />
          <circle cx="8" cy="20" r="2.500" fill="#c9a58c" />
          <path d="M3.500 27q4-6 9 0-4 3-9 0z" fill="#8a8f98" />
        </Icon>
      </button>
      <button aria-label="KiCad" className="ml-[6px] flex w-[60px] items-center justify-center border-b-[3px] border-[#8ee6ea] bg-[#4a4c53] pt-[3px]">
        <span className="flex size-7 items-center justify-center rounded bg-[#2746d8] text-[17px] font-bold">Ki</span>
      </button>

      <div className="flex flex-1 items-center justify-end">
        <div className="flex h-[26px] w-[61px] items-center justify-center border-[3px] border-white bg-[#1a9a48] text-[17px]">100%</div>
        <div className="h-3 w-[3px] bg-white" />
        <div className="ml-2">
          <Icon w={12} h={20}>
            <path d="M3 0v6M9 0v6" stroke="#fff" strokeWidth="2.200" />
            <path d="M1 5.500h10v5L8 14h-.8v6H4.800v-6H4L1 10.500z" fill="#fff" />
          </Icon>
        </div>
        <button aria-label="Iconos ocultos" className="ml-[13px]">
          <Icon w={16} h={10}>
            <path d="M1 9l7-7.500L15 9" stroke="#fff" strokeWidth="1.400" />
          </Icon>
        </button>
        <div className="ml-3">
          <Icon w={20} h={16}>
            <path d="M4.500 3.500h13v11h-13z" stroke="#fff" strokeWidth="1.200" />
            <path d="M6 5.500h10v7H6z" fill="#fff" />
            <path d="M19 7v4" stroke="#fff" strokeWidth="2" />
            <path d="M0 2.500h5.500v3L4 7.500H1.500L0 5.500z" fill="#fff" stroke="#1e2127" strokeWidth="0.600" />
            <path d="M1.500 0v3M4 0v3M2.800 7v5" stroke="#fff" strokeWidth="1.100" />
          </Icon>
        </div>
        <div className="ml-3">
          <Icon w={17} h={17}>
            <g stroke="#777c84" strokeWidth="1.400">
              <path d="M1 16C1 8 8 1 16 1M5 16c0-6 5-11 11-11M9 16c0-4 3-7 7-7" />
            </g>
            <circle cx="14" cy="14.500" r="1.800" fill="#fff" />
          </Icon>
        </div>
        <div className="ml-[9px]">
          <Icon w={21} h={17}>
            <path d="M1 6h3l4-4v13l-4-4H1z" stroke="#fff" strokeWidth="1.300" />
            <path d="M11 6q2 2.500 0 5" stroke="#fff" strokeWidth="1.300" />
            <path d="M14 4q4 4.500 0 9M17 2q5 6.500 0 13" stroke="#8a8e95" strokeWidth="1.300" />
          </Icon>
        </div>
        <div className="ml-[14px]">
          <Icon w={22} h={24}>
            <path d="M9 21l.5-5L15 2.500q2.500-2 3.500.8L13 17z" stroke="#fff" strokeWidth="1.300" />
            <path d="M9 12.500q-5-.5-7 4t1.500 5.500q3 .5 5-4M15 13.500q4-3 5-1.500t-3 3.500" stroke="#fff" strokeWidth="1.300" />
          </Icon>
        </div>
        <div className="w-[108px] text-center leading-[22px]">
          <div>9:57</div>
          <div>24-04-2025</div>
        </div>
        <button aria-label="Notificaciones" className="ml-2">
          <Icon w={20} h={20}>
            <path d="M.7 1h18.600v15H13l-3 3-3-3H.7z" stroke="#fff" strokeWidth="1.300" />
          </Icon>
        </button>
        <div className="mr-[5px] ml-[25px] h-[50px] w-px bg-[#6a6d73]" />
      </div>
    </footer>
  );
}

/* ---------- page ---------- */

export default function App() {
  return (
    <div className="relative flex h-screen flex-col overflow-hidden bg-white font-['Open_Sans','Noto_Sans',sans-serif] text-black">
      <header className="flex h-7 shrink-0 items-center bg-white pl-[2px] text-[14px] text-[#999]">
        <Icon size={20}>
          <rect width="20" height="20" rx="4" fill="#d0c3ac" />
          <path d="M7 6v14M0 11h7M7 10h7M7 14l4 4M12 13h5M12 16h4" stroke="#333" strokeWidth="2" />
          <path d="M8 0h3v4H8zM13 8h6v2.500h-6zM8 17h3v3H8z" fill={RED} />
        </Icon>
        <h1 className="ml-[5px] flex-1">*udpudu [udpudu] — Editor de esquemas</h1>
        <div className="flex items-center gap-[45px] pr-[25px]">
          <button aria-label="Minimizar">
            <svg width="13" height="13" viewBox="0 0 13 13" stroke="#8a8a8a" aria-hidden="true">
              <path d="M0 6.500h13" />
            </svg>
          </button>
          <button aria-label="Restaurar">
            <svg width="13" height="13" viewBox="0 0 13 13" fill="none" stroke="#8a8a8a" aria-hidden="true">
              <path d="M.5 3.500h9v9h-9zM2.500 3V.5h10v9.500H10" />
            </svg>
          </button>
          <button aria-label="Cerrar">
            <Cross color="#8a8a8a" />
          </button>
        </div>
      </header>
      <nav className="flex h-6 shrink-0 items-center gap-[14px] bg-white pt-[2px] pl-[7px] text-[14px] text-[#6d6d6d]">
        {["Archivo", "Editar", "Ver", "Añadir", "Inspeccionar", "Herramientas", "Preferencias", "Ayuda"].map((m) => (
          <button key={m}>{m}</button>
        ))}
      </nav>
      <TopToolbar />
      <main className="flex min-h-0 flex-1">
        <LeftPanels />
        <div className="w-11 shrink-0 bg-[#f0f0f0]" />
        <div className="min-w-0 flex-1 border border-[#a0a0a0] bg-[#f5f4ef]">
          <Schematic />
        </div>
        <SideToolbar />
      </main>
      <BottomBars />
      <Taskbar />
      <FieldDialog />
      <ChooserDialog />
    </div>
  );
}
